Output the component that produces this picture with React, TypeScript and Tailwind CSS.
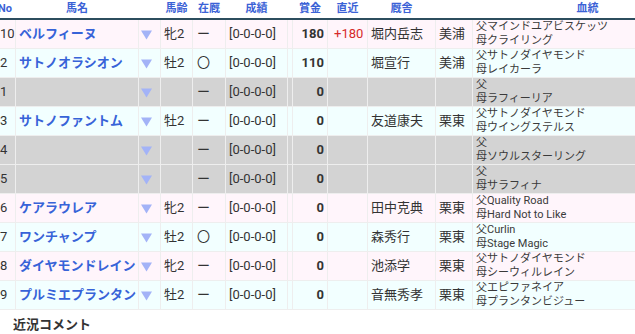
import React from 'react';

type Horse = {
  no: string;
  name: string;
  sex: string;
  stay: string;
  prize: string;
  recent: string;
  trainer: string;
  area: string;
  sire: string;
  dam: string;
  tone: 'f' | 'm' | 'x';
};

const horses: Horse[] = [
  { no: '10', name: 'ベルフィーヌ', sex: '牝2', stay: 'ー', prize: '180', recent: '+180', trainer: '堀内岳志', area: '美浦', sire: 'マインドユアビスケッツ', dam: 'クライリング', tone: 'f' },
  { no: '2', name: 'サトノオラシオン', sex: '牡2', stay: '〇', prize: '110', recent: '', trainer: '堀宣行', area: '美浦', sire: 'サトノダイヤモンド', dam: 'レイカーラ', tone: 'm' },
  { no: '1', name: '', sex: '', stay: 'ー', prize: '0', recent: '', trainer: '', area: '', sire: '', dam: 'ラフィーリア', tone: 'x' },
  { no: '3', name: 'サトノファントム', sex: '牡2', stay: 'ー', prize: '0', recent: '', trainer: '友道康夫', area: '栗東', sire: 'サトノダイヤモンド', dam: 'ウイングステルス', tone: 'm' },
  { no: '4', name: '', sex: '', stay: 'ー', prize: '0', recent: '', trainer: '', area: '', sire: '', dam: 'ソウルスターリング', tone: 'x' },
  { no: '5', name: '', sex: '', stay: 'ー', prize: '0', recent: '', trainer: '', area: '', sire: '', dam: 'サラフィナ', tone: 'x' },
  { no: '6', name: 'ケアラウレア', sex: '牝2', stay: 'ー', prize: '0', recent: '', trainer: '田中克典', area: '栗東', sire: 'Quality Road', dam: 'Hard Not to Like', tone: 'f' },
  { no: '7', name: 'ワンチャンプ', sex: '牡2', stay: '〇', prize: '0', recent: '', trainer: '森秀行', area: '栗東', sire: 'Curlin', dam: 'Stage Magic', tone: 'm' },
  { no: '8', name: 'ダイヤモンドレイン', sex: '牝2', stay: 'ー', prize: '0', recent: '', trainer: '池添学', area: '栗東', sire: 'サトノダイヤモンド', dam: 'シーウィルレイン', tone: 'f' },
  { no: '9', name: 'プルミエプランタン', sex: '牡2', stay: 'ー', prize: '0', recent: '', trainer: '音無秀孝', area: '栗東', sire: 'エピファネイア', dam: 'プランタンビジュー', tone: 'm' },
];

const toneClass = {
  f: 'bg-[#fff5fb]',
  m: 'bg-[#f2ffff]',
  x: 'bg-[#d3d3d3]',
};

const td = 'border border-[#eeeeee] px-[3px] py-0 align-middle whitespace-nowrap';
const th = 'border-b-2 border-b-[#2c4d5e] px-0 h-[19px] text-[11px] font-bold text-[#3b62d6] text-center align-middle';

const Arrow = () => (
  <svg width="11" height="10" viewBox="0 0 11 10" className="inline-block align-middle">
    <polygon points="0,0.5 11,0.5 5.5,9.5" fill="#a3b3f7" />
  </svg>
);

export default function App() {
  return (
    <div className="w-[635px] h-[334px] bg-white overflow-hidden text-[#333] font-['Roboto','Noto_Sans_CJK_JP',sans-serif]">
      <div className="overflow-hidden">
        <table className="table-fixed border-collapse w-[708px] -ml-[6px] text-[13px]">
          <colgroup>
            <col className="w-[21px]" />
            <col className="w-[123px]" />
            <col className="w-[22px]" />
            <col className="w-[32px]" />
            <col className="w-[33px]" />
            <col className="w-[62px]" />
            <col className="w-[5px]" />
            <col className="w-[35px]" />
            <col className="w-[40px]" />
            <col className="w-[68px]" />
            <col className="w-[37px]" />
            <col className="w-[230px]" />
          </colgroup>
          <thead>
            <tr>
              <th className={th}>No</th>
              <th className={th}>馬名</th>
              <th className={th}></th>
              <th className={th}>馬齢</th>
              <th className={th}>在厩</th>
              <th className={th}>成績</th>
              <th className={th}></th>
              <th className={th}>賞金</th>
              <th className={th}>直近</th>
              <th className={th}>厩舎</th>
              <th className={th}></th>
              <th className={th}>血統</th>
            </tr>
          </thead>
          <tbody>
            {horses.map((h) => (
              <tr key={h.no} className={`h-[29px] ${toneClass[h.tone]}`}>
                <td className={`${td} pl-[5px]`}>{h.no}</td>
                <td className={`${td} font-bold text-[#3763d8]`}>{h.name}</td>
                <td className={`${td} pl-[2px]`}><Arrow /></td>
                <td className={td}>{h.sex}</td>
                <td className={`${td} pl-[4px]`}>{h.stay}</td>
                <td className={td}>[0-0-0-0]</td>
                <td className={td}></td>
                <td className={`${td} text-right font-bold`}>{h.prize}</td>
                <td className={`${td} text-[#d62a2a] pl-[6px]`}>{h.recent}</td>
                <td className={td}>{h.trainer}</td>
                <td className={td}>{h.area}</td>
                <td className={`${td} text-[11px] leading-[14px] text-[#3a3a3a]`}>
                  <div>父{h.sire}</div>
                  <div>母{h.dam}</div>
                </td>
              </tr>
            ))}
          </tbody>
        </table>
      </div>
      <div className="pl-[13px] pt-[5px] text-[13px] font-bold text-[#333]">近況コメント</div>
    </div>
  );
}
